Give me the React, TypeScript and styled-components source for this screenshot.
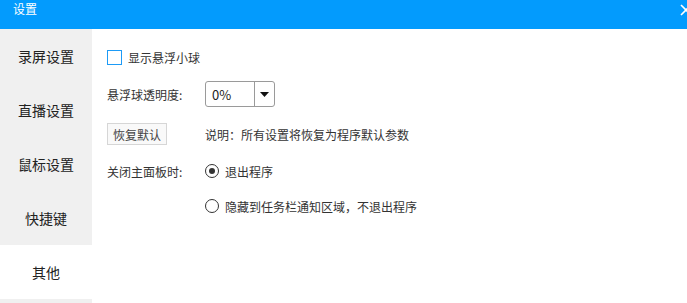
import React from "react";
import styled, { createGlobalStyle } from "styled-components";

const Global = createGlobalStyle`
  html, body { margin: 0; padding: 0; background: #fff; }
  body { font-family: "Noto Sans CJK SC", "Microsoft YaHei", sans-serif; }
  * { box-sizing: border-box; }
`;

const Window = styled.div`
  width: 687px;
  height: 303px;
  overflow: hidden;
  display: flex;
  flex-direction: column;
  background: #fff;
`;

const TitleBar = styled.div`
  height: 29px;
  flex: none;
  background: #039bfd;
  color: #fff;
  display: flex;
  align-items: flex-start;
  justify-content: space-between;
  padding-left: 13px;
  overflow: hidden;
`;

const Title = styled.div`
  font-size: 12px;
  line-height: 18px;
`;

const CloseIcon = styled.svg`
  margin-top: 4px;
  margin-right: -5px;
  flex: none;
`;

const Body = styled.div`
  flex: 1;
  display: flex;
  min-height: 0;
`;

const Sidebar = styled.nav`
  width: 92px;
  flex: none;
  background: #f0f0f0;
  display: flex;
  flex-direction: column;
`;

const NavItem = styled.div<{ $active?: boolean }>`
  height: 54px;
  display: flex;
  align-items: center;
  justify-content: center;
  font-size: 14px;
  color: #222;
  background: ${(p) => (p.$active ? "#fff" : "transparent")};
`;

const Content = styled.div`
  flex: 1;
  padding: 15px 0 0 15px;
  display: flex;
  flex-direction: column;
  font-size: 12px;
  color: #333;
`;

const Row = styled.div<{ $space?: number }>`
  display: grid;
  grid-template-columns: 98px auto;
  align-items: center;
  height: 26px;
  margin-top: ${(p) => p.$space ?? 0}px;
`;

const Inline = styled.label`
  grid-column: 1 / span 2;
  display: flex;
  align-items: center;
  gap: 6px;
`;

const Checkbox = styled.span`
  width: 15px;
  height: 15px;
  border: 1px solid #1d9bf6;
  background: #fff;
`;

const Label = styled.span`
  white-space: nowrap;
`;

const Select = styled.div`
  width: 70px;
  height: 26px;
  border: 1px solid #9a9a9a;
  border-radius: 3px;
  display: flex;
  background: #fff;
`;

const SelectValue = styled.div`
  width: 49px;
  border-right: 1px solid #9a9a9a;
  display: flex;
  align-items: center;
  padding-left: 6px;
  font-size: 13px;
  color: #222;
`;

const SelectArrow = styled.div`
  flex: 1;
  display: flex;
  align-items: center;
  justify-content: center;
`;

const Button = styled.button`
  width: 60px;
  height: 22px;
  padding: 0;
  border: 1px solid #d6d6d6;
  background: #f9f9f9;
  font: inherit;
  font-size: 12px;
  color: #444;
`;

const Radio = styled.span<{ $checked?: boolean }>`
  width: 14px;
  height: 14px;
  border-radius: 50%;
  border: 1px solid #333;
  display: flex;
  align-items: center;
  justify-content: center;
  &::after {
    content: "";
    width: 6px;
    height: 6px;
    border-radius: 50%;
    background: #333;
    display: ${(p) => (p.$checked ? "block" : "none")};
  }
`;

const Option = styled.label`
  grid-column: 2;
  display: flex;
  align-items: center;
  gap: 6px;
`;

const nav = ["录屏设置", "直播设置", "鼠标设置", "快捷键", "其他"];

export default function App() {
  return (
    <>
      <Global />
      <Window>
        <TitleBar>
          <Title>设置</Title>
          <CloseIcon width="12" height="12" viewBox="0 0 12 12">
            <path d="M1 1 L11 11 M11 1 L1 11" stroke="#fff" strokeWidth="1.6" fill="none" />
          </CloseIcon>
        </TitleBar>
        <Body>
          <Sidebar>
            {nav.map((n) => (
              <NavItem key={n} $active={n === "其他"}>
                {n}
              </NavItem>
            ))}
          </Sidebar>
          <Content>
            <Row>
              <Inline>
                <Checkbox />
                <Label>显示悬浮小球</Label>
              </Inline>
            </Row>
            <Row $space={11}>
              <Label>悬浮球透明度:</Label>
              <Select>
                <SelectValue>0%</SelectValue>
                <SelectArrow>
                  <svg width="9" height="5" viewBox="0 0 9 5">
                    <path d="M0 0 H9 L4.5 5 Z" fill="#111" />
                  </svg>
                </SelectArrow>
              </Select>
            </Row>
            <Row $space={14}>
              <Button>恢复默认</Button>
              <Label>说明：所有设置将恢复为程序默认参数</Label>
            </Row>
            <Row $space={11}>
              <Label>关闭主面板时:</Label>
              <Option>
                <Radio $checked />
                <Label>退出程序</Label>
              </Option>
            </Row>
            <Row $space={9}>
              <Option>
                <Radio />
                <Label>隐藏到任务栏通知区域，不退出程序</Label>
              </Option>
            </Row>
          </Content>
        </Body>
      </Window>
    </>
  );
}
